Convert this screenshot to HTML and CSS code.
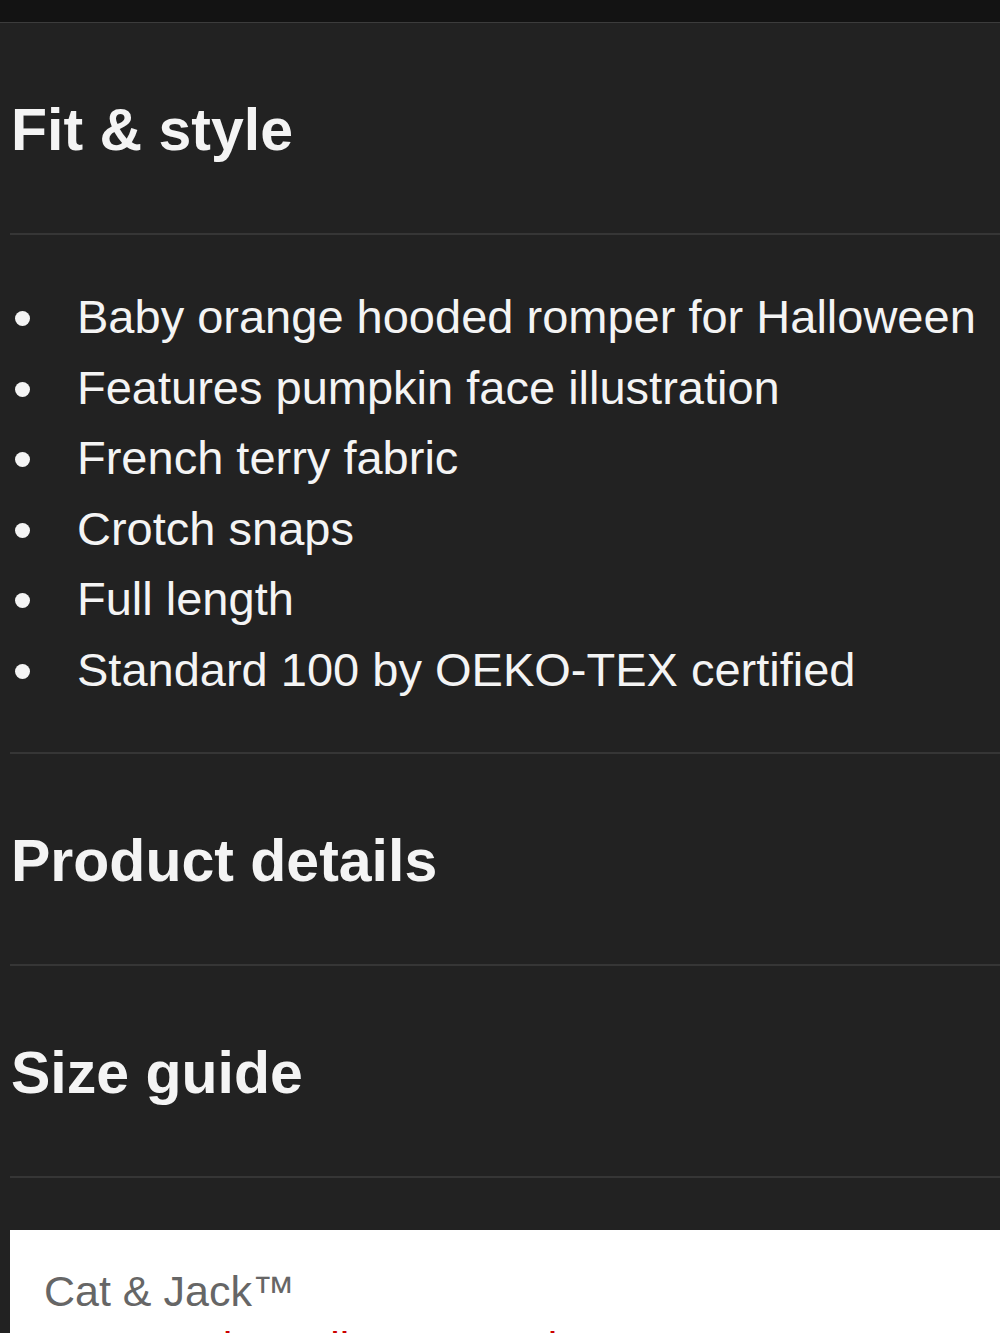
FILE: index.html
```html
<!DOCTYPE html>
<html>
<head>
<meta charset="utf-8">
<link rel="stylesheet" href="styles.css">
</head>
<body>
<div class="topbar"></div>
<main class="content">
  <section class="acc-head"><h2>Fit &amp; style</h2></section>
  <section class="acc-body">
    <ul class="bullets">
      <li>Baby orange hooded romper for Halloween</li>
      <li>Features pumpkin face illustration</li>
      <li>French terry fabric</li>
      <li>Crotch snaps</li>
      <li>Full length</li>
      <li>Standard 100 by OEKO-TEX certified</li>
    </ul>
  </section>
  <section class="acc-head"><h2>Product details</h2></section>
  <section class="acc-head"><h2>Size guide</h2></section>
  <div class="spacer"></div>
  <section class="card">
    <p class="brand">Cat &amp; Jack™</p>
    <p class="shop">Shop all Cat &amp; Jack</p>
  </section>
</main>
</body>
</html>
```
FILE: styles.css
```css
html, body {
  margin: 0;
  padding: 0;
  background: #222222;
  height: 1333px;
  overflow: hidden;
}
body {
  font-family: "Liberation Sans", Arial, sans-serif;
  color: #f4f4f4;
}
.topbar {
  height: 22px;
  background: #131313;
  border-bottom: 1px solid #3c3c3c;
}
.content {
  padding-left: 10px;
}
.acc-head {
  height: 210px;
  border-bottom: 2px solid #363636;
  display: flex;
  align-items: center;
}
.acc-head h2 {
  margin: 0;
  font-size: 59px;
  font-weight: 700;
  letter-spacing: 0;
  padding-left: 1px;
  position: relative;
  top: 2px;
}
.acc-body {
  border-bottom: 2px solid #363636;
  padding: 47px 0 46px;
}
.bullets {
  list-style: none;
  margin: 0;
  padding: 0;
}
.bullets li {
  font-size: 47px;
  line-height: 70.6px;
  height: 70.6px;
  padding-left: 67px;
  position: relative;
  white-space: nowrap;
}
.bullets li::before {
  content: "";
  position: absolute;
  left: 5px;
  top: 29px;
  width: 15px;
  height: 15px;
  border-radius: 50%;
  background: #f4f4f4;
}
.spacer {
  height: 52px;
}
.card {
  background: #ffffff;
  padding: 36px 34px 0;
  height: 200px;
}
.brand {
  margin: 0;
  color: #666666;
  font-size: 43px;
  line-height: 50px;
}
.shop {
  margin: 0;
  padding-left: 150px;
  color: #cc0000;
  font-size: 43px;
  line-height: 50px;
  margin-top: 6px;
}
```
